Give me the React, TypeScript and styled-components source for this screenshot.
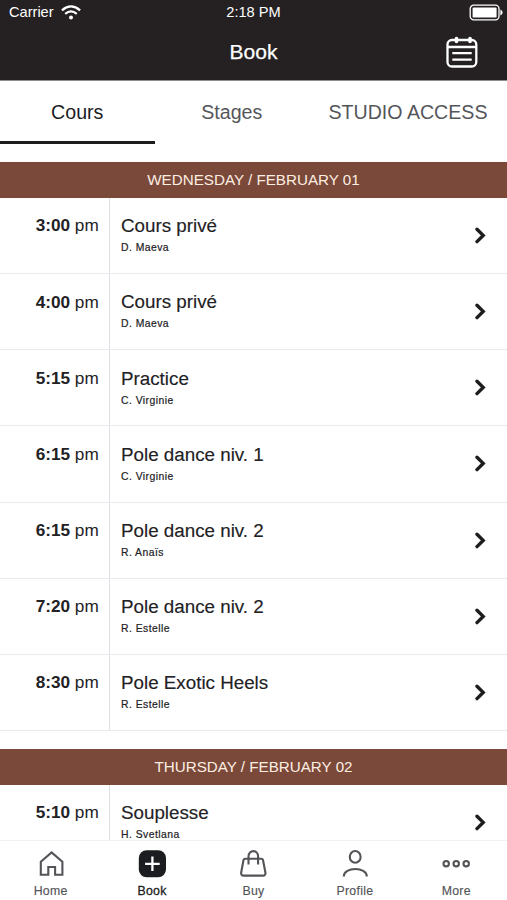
import React from "react";
import styled, { createGlobalStyle } from "styled-components";

const GlobalStyle = createGlobalStyle`
  * { box-sizing: border-box; }
  body { margin: 0; background: #fff; }
  button { border: 0; padding: 0; background: none; font: inherit; color: inherit; }
  svg { display: block; }
`;

const Screen = styled.div`
  width: 507px;
  height: 900px;
  display: flex;
  flex-direction: column;
  overflow: hidden;
  background: #fff;
  color: #222124;
  font-family: "Liberation Sans", Arial, sans-serif;
`;

const Header = styled.header`
  flex: none;
  height: 81px;
  background: #252122;
  border-bottom: 1px solid #8f8d8e;
  color: #fff;
`;

const StatusBar = styled.div`
  display: grid;
  grid-template-columns: 1fr auto 1fr;
  align-items: center;
  height: 25px;
  padding: 0 4px 0 9px;
  font-size: 14.6px;
  line-height: 25px;
`;

const Carrier = styled.div`
  display: flex;
  align-items: center;
  gap: 7px;
`;

const Clock = styled.span`
  margin: 0 5px 0 0;
`;

const Battery = styled.div`
  justify-self: end;
`;

const TitleBar = styled.div`
  display: grid;
  grid-template-columns: 1fr auto 1fr;
  align-items: center;
  height: 54px;
  padding: 0 29px;
`;

const Title = styled.h1`
  grid-column: 2;
  margin: 0;
  font-size: 21px;
  font-weight: 400;
  line-height: 54px;
  -webkit-text-stroke: 0.25px #fff;
`;

const CalendarButton = styled.button`
  justify-self: end;
`;

const Tabs = styled.nav`
  flex: none;
  display: grid;
  grid-template-columns: 154.5px 154.5px 1fr;
  height: 63px;
`;

const Tab = styled.button<{ $active?: boolean }>`
  height: 63px;
  padding-top: 3px;
  border-bottom: 3.6px solid ${(p) => (p.$active ? "#1c1b1e" : "transparent")};
  color: ${(p) => (p.$active ? "#1c1b1e" : "#55565a")};
  font-size: 19.6px;
  white-space: nowrap;
`;

const Schedule = styled.main`
  flex: 1;
  min-height: 0;
  overflow: hidden;
`;

const Day = styled.section`
  padding-top: 18.3px;
`;

const DayTitle = styled.h2`
  margin: 0;
  height: 35.7px;
  background: #7a4939;
  color: #fdeee2;
  font-size: 15.2px;
  font-weight: 400;
  line-height: 35px;
  text-align: center;
`;

const Row = styled.article`
  display: grid;
  grid-template-columns: 110px 1fr 44px;
  height: 76.15px;
  border-bottom: 1px solid #e8eaed;
`;

const Time = styled.div`
  padding: 17.5px 10.3px 0 0;
  border-right: 1px solid #dddfe4;
  font-size: 17.2px;
  line-height: 20px;
  text-align: right;
  white-space: nowrap;
`;

const Details = styled.div`
  padding: 17.3px 0 0 11px;
`;

const CourseName = styled.h3`
  margin: 0;
  font-size: 18.8px;
  font-weight: 400;
  line-height: 22px;
  -webkit-text-stroke: 0.15px;
`;

const Teacher = styled.p`
  margin: 4px 0 0;
  font-size: 10.4px;
  letter-spacing: 0.45px;
  line-height: 14px;
  -webkit-text-stroke: 0.2px;
`;

const Chevron = styled.div`
  padding: 29px 0 0 10.5px;
`;

const BottomNav = styled.nav`
  flex: none;
  display: grid;
  grid-template-columns: repeat(5, 1fr);
  height: 60px;
  border-top: 1px solid #f1f1f2;
  background: #fff;
`;

const NavItem = styled.button<{ $active?: boolean }>`
  display: flex;
  flex-direction: column;
  align-items: center;
  padding: 8px 0 0;
  color: ${(p) => (p.$active ? "#1c1d21" : "#535458")};
  font-size: 12.3px;
  letter-spacing: 0.3px;
  line-height: 14px;
  -webkit-text-stroke: ${(p) => (p.$active ? "0.3px" : "0.15px")};
  gap: 6px;
`;

const WifiIcon = () => (
  <svg width="20" height="15" viewBox="0 0 20 15" fill="none" stroke="#fff" strokeWidth="2.2">
    <path d="M.9 5.3Q10 -2.5 19.1 5.3M4.2 8.8Q10 3.8 15.8 8.8" />
    <circle cx="10" cy="12.4" r="2" fill="#fff" stroke="none" />
  </svg>
);

const BatteryIcon = () => (
  <svg width="34" height="17" viewBox="0 0 34 17">
    <rect x="1.2" y="1.2" width="28.8" height="14.6" rx="3.6" fill="none" stroke="#fff" strokeWidth="1.3" />
    <rect x="3.6" y="3.4" width="24" height="10.2" rx="1.2" fill="#fff" />
    <path d="M31.4 5.6Q33.6 6.4 33.6 8.5T31.4 11.4Z" fill="#fff" />
  </svg>
);

const CalendarIcon = () => (
  <svg width="32" height="32" viewBox="0 0 32 32" fill="none" stroke="#fff" strokeWidth="2.3">
    <rect x="1.5" y="4" width="28.8" height="26.5" rx="4.5" />
    <path d="M2 11H30M6.3 17.2H25.7M6.3 23.6H25.7" />
    <path d="M10.5 2.5V5.5M24 2.5V5.5" strokeWidth="3.6" strokeLinecap="round" />
  </svg>
);

const ChevronIcon = () => (
  <svg width="14" height="17" viewBox="0 0 14 17" fill="none" stroke="#1d1d1f" strokeWidth="3.4">
    <path d="M3 2.2L9.2 8.4L3 14.6" strokeLinecap="round" />
  </svg>
);

const navIcon = {
  width: 30,
  height: 29,
  viewBox: "0 0 30 29",
  fill: "none",
  stroke: "#535458",
  strokeWidth: 2.1,
};

const HomeIcon = () => (
  <svg {...navIcon}>
    <path d="M4.8 12.7L15.6 3.4L26.4 12.7V25.7H19.1V18H12.3V25.7H4.8Z" />
  </svg>
);

const BookIcon = () => (
  <svg {...navIcon}>
    <rect x="1.8" y="1.2" width="27.2" height="27" rx="7.8" fill="#1c1d21" stroke="none" />
    <path d="M15.4 7.5V22M8.1 14.8H22.7" stroke="#fff" strokeWidth="2.3" />
  </svg>
);

const BagIcon = () => (
  <svg {...navIcon}>
    <path d="M7.2 9.7H23.3Q24.7 9.7 25 11L27.4 23.5Q27.8 26.6 24.9 26.6H5.7Q2.8 26.6 3.2 23.5L5.5 11Q5.8 9.7 7.2 9.7Z" />
    <path d="M10.5 15.5V7.5C10.5 .3 20.1 .3 20.1 7.5V15.5" />
  </svg>
);

const ProfileIcon = () => (
  <svg {...navIcon}>
    <ellipse cx="15.2" cy="7.9" rx="5.4" ry="5.9" />
    <path d="M3.8 27.5C3.8 17.4 26.8 17.4 26.8 27.5" />
  </svg>
);

const MoreIcon = () => (
  <svg {...navIcon}>
    <circle cx="5.2" cy="14.7" r="2.7" />
    <circle cx="15.2" cy="14.7" r="2.7" />
    <circle cx="25.2" cy="14.7" r="2.7" />
  </svg>
);

const days = [
  {
    title: "WEDNESDAY / FEBRUARY 01",
    courses: [
      ["3:00", "Cours privé", "D. Maeva"],
      ["4:00", "Cours privé", "D. Maeva"],
      ["5:15", "Practice", "C. Virginie"],
      ["6:15", "Pole dance niv. 1", "C. Virginie"],
      ["6:15", "Pole dance niv. 2", "R. Anaïs"],
      ["7:20", "Pole dance niv. 2", "R. Estelle"],
      ["8:30", "Pole Exotic Heels", "R. Estelle"],
    ],
  },
  {
    title: "THURSDAY / FEBRUARY 02",
    courses: [["5:10", "Souplesse", "H. Svetlana"]],
  },
];

const navItems = [
  { label: "Home", Icon: HomeIcon },
  { label: "Book", Icon: BookIcon },
  { label: "Buy", Icon: BagIcon },
  { label: "Profile", Icon: ProfileIcon },
  { label: "More", Icon: MoreIcon },
];

export default function App() {
  return (
    <Screen>
      <GlobalStyle />
      <Header>
        <StatusBar>
          <Carrier>
            Carrier
            <WifiIcon />
          </Carrier>
          <Clock>2:18 PM</Clock>
          <Battery>
            <BatteryIcon />
          </Battery>
        </StatusBar>
        <TitleBar>
          <Title>Book</Title>
          <CalendarButton aria-label="Calendar">
            <CalendarIcon />
          </CalendarButton>
        </TitleBar>
      </Header>
      <Tabs>
        <Tab $active>Cours</Tab>
        <Tab>Stages</Tab>
        <Tab>STUDIO ACCESS</Tab>
      </Tabs>
      <Schedule>
        {days.map((day) => (
          <Day key={day.title}>
            <DayTitle>{day.title}</DayTitle>
            {day.courses.map(([time, name, teacher]) => (
              <Row key={time + name}>
                <Time>
                  <b>{time}</b> pm
                </Time>
                <Details>
                  <CourseName>{name}</CourseName>
                  <Teacher>{teacher}</Teacher>
                </Details>
                <Chevron>
                  <ChevronIcon />
                </Chevron>
              </Row>
            ))}
          </Day>
        ))}
      </Schedule>
      <BottomNav>
        {navItems.map(({ label, Icon }) => (
          <NavItem key={label} $active={label === "Book"}>
            <Icon />
            {label}
          </NavItem>
        ))}
      </BottomNav>
    </Screen>
  );
}
